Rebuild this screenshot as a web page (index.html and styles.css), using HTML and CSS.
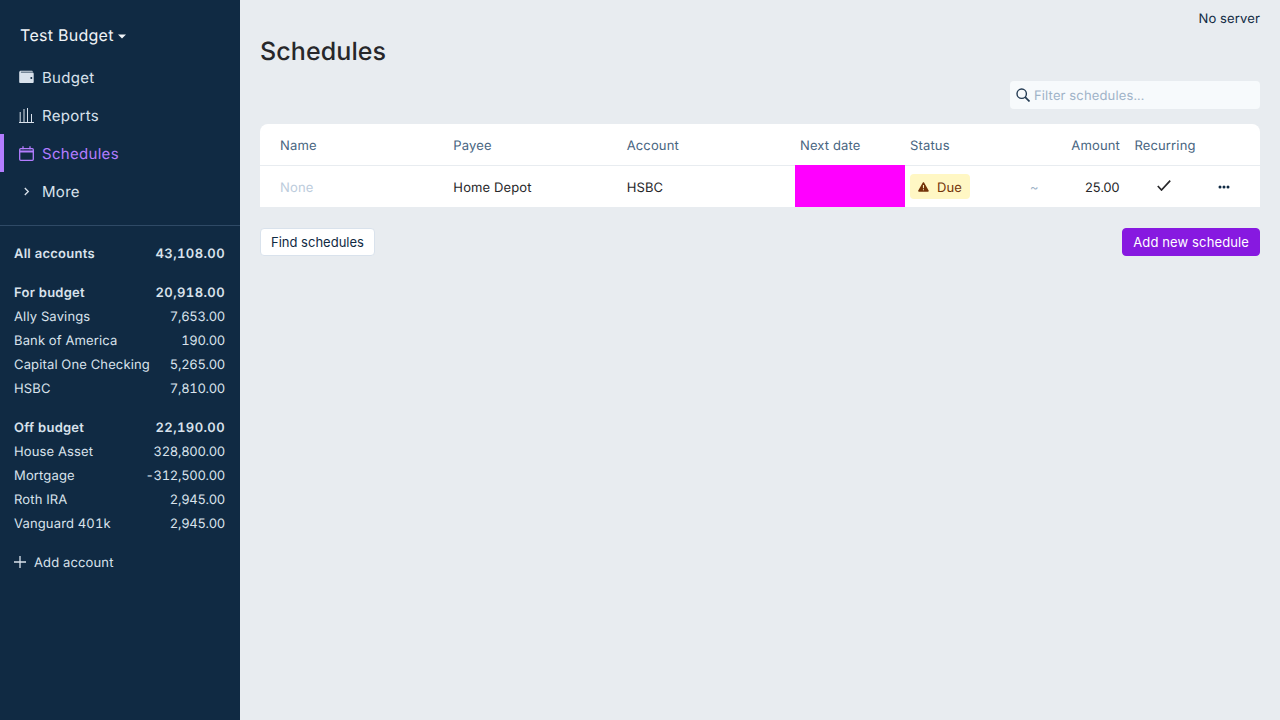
FILE: index.html
```html
<!DOCTYPE html>
<html lang="en">
<head>
    <meta charset="UTF-8">
    <meta name="viewport" content="width=device-width, initial-scale=1.0">
    <title>Schedules</title>
    <link rel="stylesheet" href="styles.css">
</head>
<body>
    <aside class="sidebar">
        <div class="budget-title">Test Budget
            <svg class="caret" width="8" height="5" viewBox="0 0 8 5"><path d="M0 .5h8L4 4.500z" fill="currentColor"/></svg>
        </div>
        <nav class="nav">
            <div class="nav-item">
                <svg class="nav-icon" width="15" height="15" viewBox="0 0 15 15"><path d="M2 .8h10.500c.8 0 1.300.4 1.400 1H2.200c-.6 0-.6.7 0 .7h11.300c.7 0 1.200.5 1.200 1.200v8.200c0 .7-.5 1.200-1.200 1.200H1.500C.7 13.100.2 12.600.2 11.900V2.400C.2 1.500 1 .8 2 .8z" fill="currentColor"/><circle cx="12.300" cy="8" r="1" fill="#102a43"/></svg>
                <span>Budget</span>
            </div>
            <div class="nav-item">
                <svg class="nav-icon" width="15" height="15" viewBox="0 0 15 15" fill="none" stroke="currentColor" stroke-width="1"><path d="M0 14.500h15M1.200 14V4M5 14V1M8.500 14V0M12.500 14V6"/></svg>
                <span>Reports</span>
            </div>
            <div class="nav-item active">
                <svg class="nav-icon" width="15" height="15" viewBox="0 0 15 15" fill="none" stroke="currentColor" stroke-width="1.300"><rect x=".7" y="2.700" width="13.600" height="11.600" rx="1"/><path d="M.7 5.500h13.600" stroke-width="2"/><path d="M4 .2v3M11 .2v3"/></svg>
                <span>Schedules</span>
            </div>
            <div class="nav-item">
                <svg class="nav-icon" width="15" height="15" viewBox="0 0 15 15" fill="none" stroke="currentColor" stroke-width="1.300"><path d="M5.800 4l3.500 3.500-3.500 3.500"/></svg>
                <span>More</span>
            </div>
        </nav>
        <div class="separator"></div>
        <div class="accounts">
            <div class="account-row total"><span>All accounts</span><span class="num">43,108.00</span></div>
            <div class="account-row total group"><span>For budget</span><span class="num">20,918.00</span></div>
            <div class="account-row"><span>Ally Savings</span><span class="num">7,653.00</span></div>
            <div class="account-row"><span>Bank of America</span><span class="num">190.00</span></div>
            <div class="account-row"><span>Capital One Checking</span><span class="num">5,265.00</span></div>
            <div class="account-row"><span>HSBC</span><span class="num">7,810.00</span></div>
            <div class="account-row total group"><span>Off budget</span><span class="num">22,190.00</span></div>
            <div class="account-row"><span>House Asset</span><span class="num">328,800.00</span></div>
            <div class="account-row"><span>Mortgage</span><span class="num">-312,500.00</span></div>
            <div class="account-row"><span>Roth IRA</span><span class="num">2,945.00</span></div>
            <div class="account-row"><span>Vanguard 401k</span><span class="num">2,945.00</span></div>
        </div>
        <div class="add-account">
            <svg class="plus" width="12" height="12" viewBox="0 0 12 12" fill="none" stroke="currentColor" stroke-width="1.300"><path d="M6 0v12M0 6h12"/></svg>
            <span>Add account</span>
        </div>
    </aside>

    <main class="content">
        <div class="server-status">No server</div>
        <h1 class="page-title">Schedules</h1>
        <div class="filter-row">
            <div class="search">
                <svg width="14" height="14" viewBox="0 0 14 14" fill="none" stroke="#243b53" stroke-width="1.400"><circle cx="5.700" cy="5.700" r="4.700"/><path d="M9.200 9.200l4.300 4.300" stroke-width="1.700"/></svg>
                <span>Filter schedules...</span>
            </div>
        </div>
        <section class="table">
            <div class="table-row table-head">
                <div class="cell">Name</div>
                <div class="cell">Payee</div>
                <div class="cell">Account</div>
                <div class="cell">Next date</div>
                <div class="cell">Status</div>
                <div class="cell right">Amount</div>
                <div class="cell center">Recurring</div>
                <div class="cell"></div>
            </div>
            <div class="table-row table-body">
                <div class="cell muted"><span>None</span></div>
                <div class="cell"><span>Home Depot</span></div>
                <div class="cell"><span>HSBC</span></div>
                <div class="cell date-cell"></div>
                <div class="cell">
                    <div class="badge">
                        <svg width="13" height="12" viewBox="0 0 13 12"><path d="M6.500.3c.4 0 .7.2.9.5l5.300 9.400c.4.700-.1 1.500-.9 1.500H1.200C.4 11.700-.1 10.900.3 10.200L5.600.8c.2-.3.5-.5.9-.5z" fill="#733309"/><path d="M6.500 3.500v4M6.500 8.700v1.200" stroke="#fff7c4" stroke-width="1.200"/></svg>
                        <span>Due</span>
                    </div>
                </div>
                <div class="cell amount-cell"><span class="tilde">~</span><span class="amount">25.00</span></div>
                <div class="cell center">
                    <svg class="check" width="14" height="11" viewBox="0 0 14 11" fill="none" stroke="#27272a" stroke-width="1.700"><path d="M.8 6l3.700 4L13.200.7"/></svg>
                </div>
                <div class="cell center">
                    <svg class="dots" width="12" height="4" viewBox="0 0 12 4" fill="#102a43"><circle cx="2" cy="2" r="1.500"/><circle cx="6" cy="2" r="1.500"/><circle cx="10" cy="2" r="1.500"/></svg>
                </div>
            </div>
        </section>
        <div class="actions">
            <button class="btn">Find schedules</button>
            <button class="btn btn-primary">Add new schedule</button>
        </div>
    </main>
</body>
</html>
```

FILE: styles.css
```css
* {
    box-sizing: border-box;
}
body {
    font-family: Inter, "Liberation Sans", sans-serif;
    font-size: 13px;
    font-feature-settings: "tnum";
    text-rendering: geometricPrecision;
    letter-spacing: 0.15px;
    margin: 0;
    height: 720px;
    overflow: hidden;
    display: flex;
    background-color: #e8ecf0;
    color: #102a43;
}
.sidebar {
    width: 240px;
    flex-shrink: 0;
    background-color: #102a43;
    color: #d9e2ec;
}
.budget-title {
    height: 59px;
    padding: 25px 0 0 20px;
    font-size: 16px;
    line-height: 20px;
    letter-spacing: 0.3px;
    color: #f0f4f8;
}
.caret {
    margin-bottom: 2px;
}
.nav-item {
    height: 38px;
    display: flex;
    align-items: center;
    gap: 8px;
    padding-left: 19px;
    font-size: 15px;
    letter-spacing: 0.3px;
    margin-top: -1px;
    margin-bottom: 1px;
}
.nav-item.active {
    border-left: 4px solid #b37dff;
    padding-left: 15px;
    color: #b37dff;
}
.separator {
    height: 1px;
    margin-top: 15px;
    background-color: #2f4a66;
}
.accounts {
    padding: 16px 15px 0 14px;
}
.account-row {
    height: 24px;
    display: flex;
    justify-content: space-between;
    align-items: center;
}
.account-row .num {
    letter-spacing: -0.3px;
}
.account-row.total {
    font-weight: 600;
    letter-spacing: 0.25px;
}
.account-row.total .num {
    letter-spacing: 0.4px;
}
.account-row.group {
    margin-top: 15px;
}
.add-account {
    display: flex;
    align-items: center;
    gap: 8px;
    margin-top: 15px;
    padding: 0 14px;
    height: 24px;
}
.plus {
    margin-bottom: 2px;
}
.content {
    flex: 1;
    padding: 0 20px;
}
.server-status {
    text-align: right;
    padding-top: 11px;
    line-height: 16px;
}
.page-title {
    margin: 9px 0 0;
    font-size: 25px;
    font-weight: 450;
    line-height: 32px;
    letter-spacing: 0.1px;
    color: #27272a;
}
.filter-row {
    display: flex;
    justify-content: flex-end;
    margin-top: 13px;
}
.search {
    width: 250px;
    height: 28px;
    display: flex;
    align-items: center;
    gap: 4px;
    padding-left: 6px;
    border-radius: 4px;
    background-color: #f7fafc;
    color: #9fb3c8;
}
.search span {
    padding-top: 2px;
}
.table {
    margin-top: 15px;
    background: white;
    border-radius: 8px 8px 0 0;
}
.table-row {
    display: grid;
    grid-template-columns: 1fr 1fr 1fr 110px 120px 100px 80px 40px;
    padding: 0 15px;
}
.table-head {
    height: 42px;
    border-bottom: 1px solid #e8ecf0;
    color: #486581;
}
.table-head .cell {
    padding-top: 2px;
}
.table-body {
    height: 41px;
    color: #27272a;
}
.table-body span {
    padding-top: 2px;
}
.cell {
    display: flex;
    align-items: center;
    padding: 0 5px;
}
.cell.right {
    justify-content: flex-end;
}
.cell.center {
    justify-content: center;
}
.muted {
    color: #bcccdc;
}
.date-cell {
    margin-top: -1px;
    background-color: #ff00ff;
}
.badge {
    display: flex;
    align-items: center;
    gap: 8px;
    width: 60px;
    height: 25px;
    padding: 0 8px;
    border-radius: 4px;
    background-color: #fff7c4;
    color: #733309;
}
.amount-cell {
    justify-content: space-between;
}
.amount {
    letter-spacing: -0.6px;
    margin-right: 1px;
}
.tilde {
    color: #9fb3c8;
}
.check {
    margin: 0 2px 3px 0;
}
.dots {
    margin-right: 2px;
}
.actions {
    display: flex;
    justify-content: space-between;
    margin-top: 21px;
}
.btn {
    height: 28px;
    padding: 0 10px;
    font-family: inherit;
    font-size: 13px;
    letter-spacing: 0;
    border: 1px solid #d9e2ec;
    border-radius: 4px;
    background: white;
    color: #102a43;
}
.btn-primary {
    letter-spacing: 0.12px;
    border-color: #8719e0;
    background-color: #8719e0;
    color: white;
}
```
